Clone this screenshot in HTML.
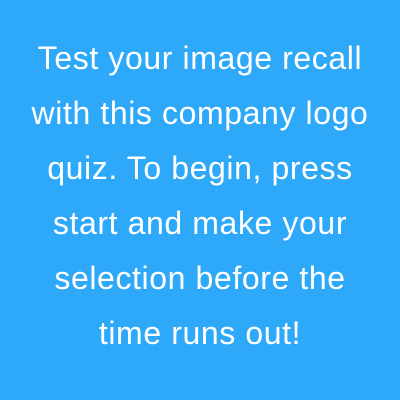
<!DOCTYPE html>
<html><head><style>
html,body{margin:0;padding:0;}
body{width:400px;height:400px;background:#2ea8f8;overflow:hidden;}
.t{position:absolute;top:31px;left:0;width:400px;text-align:center;color:#fff;font-family:"Liberation Sans",sans-serif;font-size:32px;letter-spacing:0.6px;line-height:55px;}
</style></head><body>
<div class="t">Test your image recall<br>with this company logo<br>quiz. To begin, press<br>start and make your<br>selection before the<br>time runs out!</div>
</body></html>
